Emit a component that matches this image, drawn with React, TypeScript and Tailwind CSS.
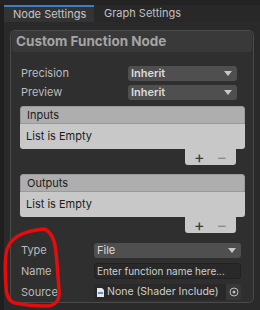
import React from "react";

const Caret = () => (
  <svg width="8" height="5" viewBox="0 0 8 5" className="shrink-0">
    <path d="M0 0 L8 0 L4 5 Z" fill="#c8c8c8" />
  </svg>
);

const Dropdown = ({ value, bold }: { value: string; bold?: boolean }) => (
  <div className="flex items-center justify-between h-[15px] rounded-[3px] bg-[#4f4f4f] pl-[3px] pr-[5px]">
    <span className={`text-[11px] leading-none text-[#dcdcdc] ${bold ? "font-semibold" : ""}`}>{value}</span>
    <Caret />
  </div>
);

const ListBox = ({ title }: { title: string }) => (
  <div className="flex flex-col">
    <div className="h-[18px] rounded-t-[3px] bg-[#aeaeae] border border-[#9a9a9a] pl-[6px] flex items-center text-[11px] text-[#1c1c1c]">
      {title}
    </div>
    <div className="h-[25px] rounded-b-[3px] rounded-tr-none bg-[#c8c8c8] pl-[6px] flex items-center text-[11px] text-[#1c1c1c]">
      List is Empty
    </div>
    <div className="flex justify-end pr-[9px]">
      <div className="w-[51px] h-[16px] bg-[#c8c8c8] rounded-b-[3px] flex items-center justify-center gap-[12px] text-[16px] leading-none">
        <span className="text-[#3a3a3a]">+</span>
        <span className="text-[#8a8a8a]">−</span>
      </div>
    </div>
  </div>
);

const App = () => {
  return (
    <div
      className="relative w-[260px] h-[310px] bg-[#1f1f1f] flex flex-col overflow-hidden"
      style={{ fontFamily: "Inter, 'Noto Sans', sans-serif" }}
    >
      <div className="h-[5px] bg-[#232323]" />
      <div className="flex h-[17px] bg-[#282828]">
        <div className="w-[4px] bg-[#1f1f1f]" />
        <div className="w-[90px] bg-[#333333] border-t-2 border-[#3d7fc2] flex items-center pl-[9px] text-[11px] text-[#c6c6c6]">
          Node Settings
        </div>
        <div className="flex items-center pl-[10px] text-[11px] text-[#c0c0c0]">Graph Settings</div>
      </div>
      <div className="flex-1 ml-[4px] bg-[#2a2a2a] pt-[8px] pl-[6px] pr-[6px] pb-[7px] flex">
        <div className="flex-1 border border-[#4a4a4a] rounded-[5px] bg-[#2f2f2f] flex flex-col">
          <div className="mx-[1px] h-[21px] bg-[#393939] rounded-[4px] flex items-center pl-[4px] text-[13.5px] font-bold text-[#a4a4a4]">
            Custom Function Node
          </div>
          <div className="pl-[9px] pr-[8px] pt-[14px] flex flex-col">
            <div className="flex items-center h-[15px] pr-[8px]">
              <span className="w-[108px] pl-[1px] text-[11px] text-[#bcbcbc]">Precision</span>
              <div className="flex-1">
                <Dropdown value="Inherit" bold />
              </div>
            </div>
            <div className="flex items-center h-[15px] mt-[4px] pr-[8px]">
              <span className="w-[108px] pl-[1px] text-[11px] text-[#bcbcbc]">Preview</span>
              <div className="flex-1">
                <Dropdown value="Inherit" bold />
              </div>
            </div>
            <div className="mt-[6px]">
              <ListBox title="Inputs" />
            </div>
            <div className="mt-[9px]">
              <ListBox title="Outputs" />
            </div>
            <div className="flex flex-col gap-[5px] mt-[10px] pr-[4px]">
              <div className="flex items-center h-[15px]">
                <span className="w-[74px] pl-[1px] text-[11px] text-[#bcbcbc]">Type</span>
                <div className="flex-1">
                  <Dropdown value="File" />
                </div>
              </div>
              <div className="flex items-center h-[16px]">
                <span className="w-[74px] pl-[1px] text-[11px] text-[#bcbcbc]">Name</span>
                <div className="flex-1 h-[16px] rounded-[3px] bg-[#292929] border border-[#212121] flex items-center pl-[2px] text-[10px] text-[#cfcfcf] whitespace-nowrap overflow-hidden">
                  Enter function name here...
                </div>
              </div>
              <div className="flex items-center h-[16px]">
                <span className="w-[74px] pl-[1px] text-[11px] text-[#bcbcbc]">Source</span>
                <div className="flex-1 h-[16px] rounded-[3px] bg-[#292929] flex items-center">
                  <div className="flex-1 flex items-center gap-[3px] pl-[3px] text-[10.5px] text-[#cfcfcf] whitespace-nowrap overflow-hidden">
                    <svg width="7" height="9" viewBox="0 0 7 9">
                      <path d="M0 0 H5 L7 2 V9 H0 Z" fill="#e8e8e8" />
                      <rect x="1" y="4" width="5" height="2" fill="#5b8fd6" />
                    </svg>
                    None (Shader Include)
                  </div>
                  <div className="w-[15px] h-[16px] bg-[#383838] rounded-r-[3px] flex items-center justify-center">
                    <svg width="10" height="10" viewBox="0 0 10 10">
                      <circle cx="5" cy="5" r="4" fill="none" stroke="#bdbdbd" strokeWidth="1" />
                      <circle cx="5" cy="5" r="1.5" fill="#bdbdbd" />
                    </svg>
                  </div>
                </div>
              </div>
            </div>
          </div>
        </div>
      </div>
      <svg className="absolute left-0 top-0 pointer-events-none" width="260" height="310" viewBox="0 0 260 310">
        <path
          d="M44 229 C52 232 55 242 56 252 C57 262 58 276 59 290 C60 300 56 306 46 306 C36 306 24 305 15 303 C8 301 6 294 6 286 C5 274 5 262 6 254 C7 246 10 241 18 236 C25 232 33 230 44 229"
          fill="none"
          stroke="#e40c0c"
          strokeWidth="3.5"
          strokeLinecap="round"
        />
      </svg>
    </div>
  );
};

export default App;
